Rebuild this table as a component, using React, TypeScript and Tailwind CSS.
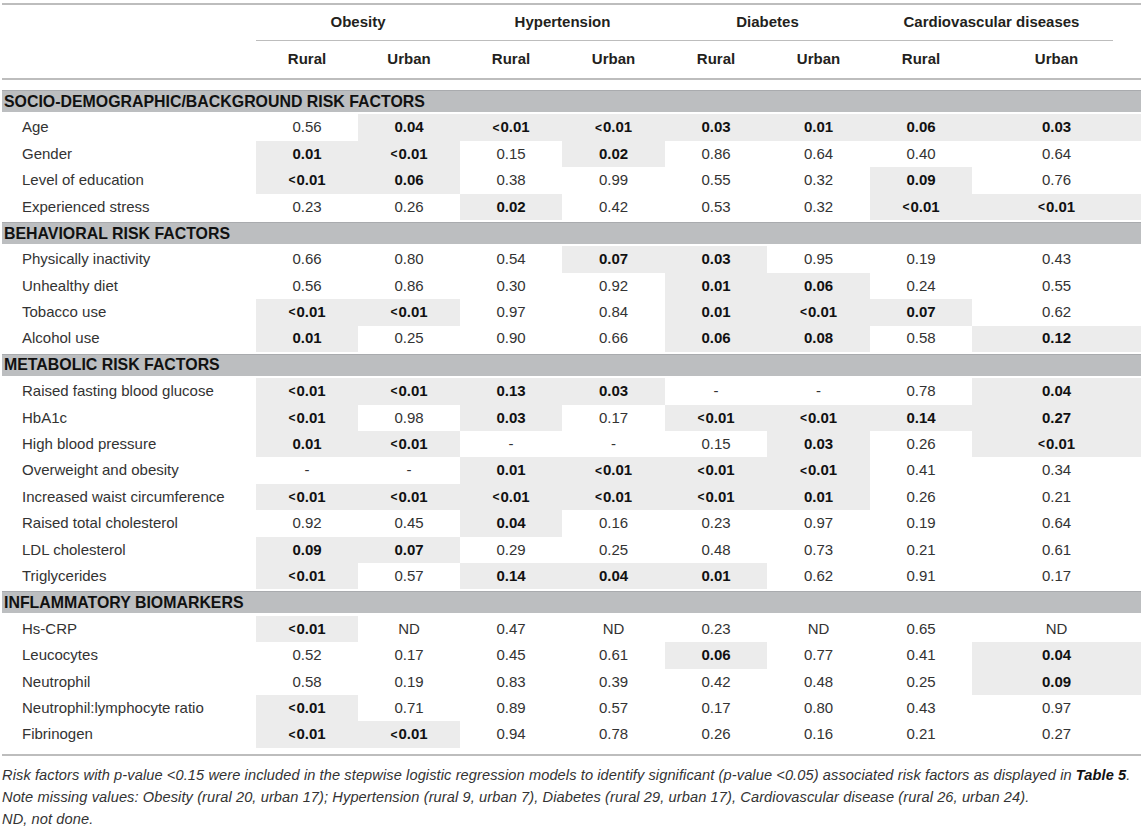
import React from "react";

// "*" marks a significant value: bold text on a grey cell
const sections: { title: string; rows: [string, string[]][] }[] = [
  {
    title: "SOCIO-DEMOGRAPHIC/BACKGROUND RISK FACTORS",
    rows: [
      ["Age", ["0.56", "*0.04", "*<0.01", "*<0.01", "*0.03", "*0.01", "*0.06", "*0.03"]],
      ["Gender", ["*0.01", "*<0.01", "0.15", "*0.02", "0.86", "0.64", "0.40", "0.64"]],
      ["Level of education", ["*<0.01", "*0.06", "0.38", "0.99", "0.55", "0.32", "*0.09", "0.76"]],
      ["Experienced stress", ["0.23", "0.26", "*0.02", "0.42", "0.53", "0.32", "*<0.01", "*<0.01"]],
    ],
  },
  {
    title: "BEHAVIORAL RISK FACTORS",
    rows: [
      ["Physically inactivity", ["0.66", "0.80", "0.54", "*0.07", "*0.03", "0.95", "0.19", "0.43"]],
      ["Unhealthy diet", ["0.56", "0.86", "0.30", "0.92", "*0.01", "*0.06", "0.24", "0.55"]],
      ["Tobacco use", ["*<0.01", "*<0.01", "0.97", "0.84", "*0.01", "*<0.01", "*0.07", "0.62"]],
      ["Alcohol use", ["*0.01", "0.25", "0.90", "0.66", "*0.06", "*0.08", "0.58", "*0.12"]],
    ],
  },
  {
    title: "METABOLIC RISK FACTORS",
    rows: [
      ["Raised fasting blood glucose", ["*<0.01", "*<0.01", "*0.13", "*0.03", "-", "-", "0.78", "*0.04"]],
      ["HbA1c", ["*<0.01", "0.98", "*0.03", "0.17", "*<0.01", "*<0.01", "*0.14", "*0.27"]],
      ["High blood pressure", ["*0.01", "*<0.01", "-", "-", "0.15", "*0.03", "0.26", "*<0.01"]],
      ["Overweight and obesity", ["-", "-", "*0.01", "*<0.01", "*<0.01", "*<0.01", "0.41", "0.34"]],
      ["Increased waist circumference", ["*<0.01", "*<0.01", "*<0.01", "*<0.01", "*<0.01", "*0.01", "0.26", "0.21"]],
      ["Raised total cholesterol", ["0.92", "0.45", "*0.04", "0.16", "0.23", "0.97", "0.19", "0.64"]],
      ["LDL cholesterol", ["*0.09", "*0.07", "0.29", "0.25", "0.48", "0.73", "0.21", "0.61"]],
      ["Triglycerides", ["*<0.01", "0.57", "*0.14", "*0.04", "*0.01", "0.62", "0.91", "0.17"]],
    ],
  },
  {
    title: "INFLAMMATORY BIOMARKERS",
    rows: [
      ["Hs-CRP", ["*<0.01", "ND", "0.47", "ND", "0.23", "ND", "0.65", "ND"]],
      ["Leucocytes", ["0.52", "0.17", "0.45", "0.61", "*0.06", "0.77", "0.41", "*0.04"]],
      ["Neutrophil", ["0.58", "0.19", "0.83", "0.39", "0.42", "0.48", "0.25", "*0.09"]],
      ["Neutrophil:lymphocyte ratio", ["*<0.01", "0.71", "0.89", "0.57", "0.17", "0.80", "0.43", "0.97"]],
      ["Fibrinogen", ["*<0.01", "*<0.01", "0.94", "0.78", "0.26", "0.16", "0.21", "0.27"]],
    ],
  },
];

const cols = "grid grid-cols-[254px_102px_102px_102px_103px_102px_103px_102px_169px]";

const Value = ({ v }: { v: string }) => {
  const sig = v.startsWith("*");
  const text = sig ? v.slice(1) : v;
  const lt = text.startsWith("<");
  return (
    <div
      className={`flex items-center justify-center ${
        sig ? "bg-[#ececec] font-bold text-[#111]" : "text-[#333]"
      }`}
    >
      {lt && <span className="text-[12px] mr-px">&lt;</span>}
      {lt ? text.slice(1) : text}
    </div>
  );
};

export default function App() {
  return (
    <div
      className="bg-white w-[1144px] h-[826px] overflow-hidden px-[2px] pt-[3px] text-[#231f20]"
      style={{ fontFamily: '"Liberation Sans", Arial, sans-serif' }}
    >
      <div className="w-[1139px] text-[15px]">
        <div className="border-t-2 border-[#bdbdbd]" />
        {/* group heads */}
        <div className={`${cols} h-[36px] font-bold`}>
          <div />
          <div className="col-span-2 flex items-center justify-center border-b border-[#bdbdbd]">Obesity</div>
          <div className="col-span-2 flex items-center justify-center border-b border-[#bdbdbd]">Hypertension</div>
          <div className="col-span-2 flex items-center justify-center border-b border-[#bdbdbd]">Diabetes</div>
          <div className="col-span-2 mr-[28px] flex items-center justify-center border-b border-[#bdbdbd]">
            Cardiovascular diseases
          </div>
        </div>
        <div className={`${cols} h-[39px] font-bold border-b-2 border-[#bdbdbd]`}>
          <div />
          {["Rural", "Urban", "Rural", "Urban", "Rural", "Urban", "Rural", "Urban"].map((s, i) => (
            <div key={i} className="flex items-center justify-center">
              {s}
            </div>
          ))}
        </div>
        <div className="h-[8px]" />
        {sections.map((sec) => (
          <div key={sec.title}>
            <div className="h-[26.4px] pt-[2px] pb-[2.4px]">
              <div className="h-full bg-[#bcbec0] border-t border-[#a9abae] flex items-center pl-[2px] font-bold text-[15.9px] text-[#111]">
                {sec.title}
              </div>
            </div>
            {sec.rows.map(([label, vals]) => (
              <div key={label} className={`${cols} h-[26.4px]`}>
                <div className="flex items-center pl-[20px] text-[#333]">{label}</div>
                {vals.map((v, i) => (
                  <Value key={i} v={v} />
                ))}
              </div>
            ))}
          </div>
        ))}
        <div className="h-[6px]" />
        <div className="border-t-2 border-[#bdbdbd]" />
        <div className="pt-[8px] text-[14.6px] italic leading-[22.5px] text-[#333] tracking-[0.1px]">
          <p>
            Risk factors with p-value &lt;0.15 were included in the stepwise logistic regression models to
            identify significant (p-value &lt;0.05) associated risk factors as displayed in{" "}
            <span className="font-bold text-[#111]">Table 5</span>.
          </p>
          <p>
            Note missing values: Obesity (rural 20, urban 17); Hypertension (rural 9, urban 7), Diabetes (rural
            29, urban 17), Cardiovascular disease (rural 26, urban 24).
          </p>
          <p className="mt-[5px] leading-[10px]">ND, not done.</p>
        </div>
      </div>
    </div>
  );
}
